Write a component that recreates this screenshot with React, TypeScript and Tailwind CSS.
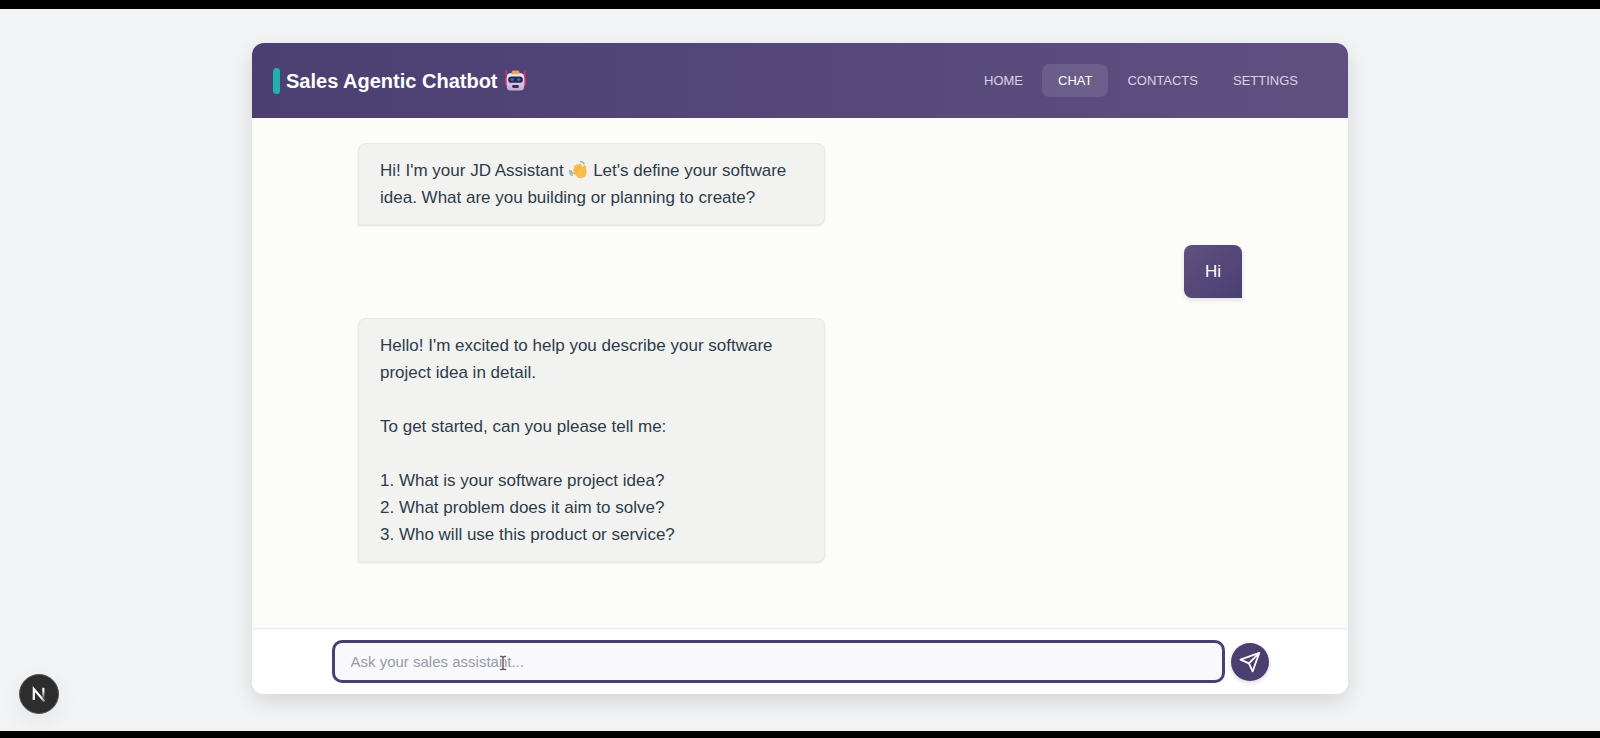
import type { ReactNode } from "react";

function RobotIcon() {
  return (
    <svg viewBox="0 0 24 24" className="h-[23px] w-[23px]" role="img" aria-label="robot">
      <defs>
        <linearGradient id="robot-face" x1="0" y1="0" x2="0" y2="1">
          <stop offset="0" stopColor="#f3e8f8" />
          <stop offset="1" stopColor="#c4a9dc" />
        </linearGradient>
      </defs>
      <path d="M2.300 1.500v13M21.700 1.500v13" stroke="#cf3a68" strokeWidth="1.500" strokeLinecap="round" />
      <rect x="1.500" y="9.500" width="3" height="8" rx="1.300" fill="#e34b77" />
      <rect x="19.500" y="9.500" width="3" height="8" rx="1.300" fill="#e34b77" />
      <rect x="3" y="4.500" width="18" height="18" rx="4" fill="url(#robot-face)" />
      <path d="M8 5.500V3.500a2 2 0 0 1 2-2h4a2 2 0 0 1 2 2v2z" fill="#e2a855" />
      <rect x="4.300" y="7.800" width="15.400" height="6.600" rx="3.300" fill="#2b2852" />
      <circle cx="8.600" cy="11" r="1.700" fill="#3568ae" />
      <circle cx="15.400" cy="11" r="1.700" fill="#3568ae" />
      <rect x="8.500" y="16.800" width="7" height="3" rx="1.200" fill="#3f2850" />
    </svg>
  );
}

function WaveIcon() {
  return (
    <svg viewBox="0 0 20 20" className="inline-block h-5 w-5 align-[-4px]" aria-hidden="true">
      <path
        d="M6.200 6.800c-.8-.9.5-2 1.300-1.200l1 1C8 5.500 7.900 4.300 9 4c.8-.2 1.300.4 1.800 1.200-.2-.9.200-1.600 1-1.700.9 0 1.400.8 1.900 1.700.5.9.9 1.600 1.200 1.800.2-.8.300-2 1.400-2 1.200 0 1.600 1.400 1.900 3.200.6 3.300.7 5.700-1 7.900-1.900 2.400-5.500 2.700-7.900.8L5.500 13.400c-.9-.8.1-2 1-1.400l-1.200-1.300c-.8-.9.300-2 1.200-1.200L5.900 8.800c-.5-.8.400-1.600 1.100-1.100z"
        fill="#f9bd48"
      />
      <path d="M7.500 7.500l3 3M6.700 9.800l2.800 2.500M10.300 6.200l2 2.800" stroke="#e5a03c" strokeWidth=".7" strokeLinecap="round" />
      <path d="M1.500 10.500c.1 2.300 1 4 2.900 5M3.200 10.800c.3 1.300.8 2 1.700 2.700M12.500 1.500c1.700.2 2.900.9 3.500 2.300" stroke="#9fb0b8" strokeWidth="1.500" fill="none" strokeLinecap="round" />
    </svg>
  );
}

function PlaneIcon() {
  return (
    <svg viewBox="0 0 24 24" className="h-6 w-6" fill="none" stroke="#fff" strokeWidth="1.800" strokeLinejoin="round" strokeLinecap="round" aria-hidden="true">
      <path d="M21.300 2.800 2.500 9.600l8.400 3.800L14.700 21.300z" />
      <path d="M21.300 2.800 10.900 13.400" />
    </svg>
  );
}

const navItems = ["HOME", "CHAT", "CONTACTS", "SETTINGS"];

function BotMessage({ children }: { children: ReactNode }) {
  return (
    <div className="max-w-[467px] self-start rounded-lg rounded-bl-none border border-[#e9eae8] bg-[#f2f3f0] px-[21px] py-[13px] whitespace-pre-wrap text-[#2d3b4b] shadow-[0_1px_2px_rgba(0,0,0,0.12)]">
      {children}
    </div>
  );
}

export default function App() {
  return (
    <div className="flex min-h-screen flex-col bg-[#f1f3f5] font-['Liberation_Sans',Arial,sans-serif]">
      <div className="h-[9px] bg-black" />
      <main className="flex flex-1 flex-col px-4 pt-[34px] pb-[37px]">
        <section className="mx-auto flex w-full max-w-[1096px] flex-1 flex-col overflow-hidden rounded-xl bg-white shadow-[0_8px_20px_rgba(0,0,0,0.12)]">
          <header className="flex h-[75px] items-center justify-between bg-linear-to-r from-[#4b3f72] to-[#5f5080] pr-[34px] pl-[21px]">
            <h1 className="flex items-center text-xl font-bold text-white">
              <span className="mr-1.5 h-[26px] w-[7px] rounded-sm bg-[#20b2aa]" />
              Sales Agentic Chatbot
              <span className="ml-1.5">
                <RobotIcon />
              </span>
            </h1>
            <nav className="flex gap-[3px]">
              {navItems.map((item) => (
                <a
                  key={item}
                  href={"#" + item.toLowerCase()}
                  aria-current={item === "CHAT" ? "page" : undefined}
                  className={
                    item === "CHAT"
                      ? "rounded-lg bg-white/10 px-4 text-[13px] leading-[33px] text-white"
                      : "rounded-lg px-4 text-[13px] leading-[33px] text-[#dcd2e6]"
                  }
                >
                  {item}
                </a>
              ))}
            </nav>
          </header>

          <div className="flex-1 bg-[#fcfdf8] px-6 pt-[25px] pb-6">
            <div className="mx-auto flex max-w-[884px] flex-col gap-5 text-[17px] leading-[27px]">
              <BotMessage>
                Hi! I'm your JD Assistant <WaveIcon /> Let's define your software idea. What are you building or planning to create?
              </BotMessage>
              <div className="self-end rounded-lg rounded-br-none bg-linear-to-br from-[#5f5080] to-[#4b3f72] px-[21px] py-[13px] text-white shadow-[0_2px_5px_rgba(0,0,0,0.12)]">
                Hi
              </div>
              <BotMessage>
                {"Hello! I'm excited to help you describe your software project idea in detail.\n\nTo get started, can you please tell me:\n\n1. What is your software project idea?\n2. What problem does it aim to solve?\n3. Who will use this product or service?"}
              </BotMessage>
            </div>
          </div>

          <footer className="border-t border-[#e6e8e8] bg-white px-6 py-[11px]">
            <form className="mx-auto flex max-w-[937px] items-center gap-1.5" onSubmit={(e) => e.preventDefault()}>
              <div className="relative flex flex-1">
                <input
                  type="text"
                  aria-label="Message"
                  placeholder="Ask your sales assistant..."
                  className="h-[43px] w-full rounded-[10px] border-3 border-[#4b3f72] bg-[#f9f9fd] px-4 text-[15px] text-[#2d3b4b] outline-none placeholder:text-[#969ba5]"
                />
                <svg viewBox="0 0 10 16" className="pointer-events-none absolute top-[15px] left-[166px] h-4 w-2.5" fill="none" aria-hidden="true">
                  <path d="M2 1.500h2l1 1 1-1h2M5 2.500v11M2 14.500h2l1-1 1 1h2" stroke="#fff" strokeWidth="2.600" />
                  <path d="M2 1.500h2l1 1 1-1h2M5 2.500v11M2 14.500h2l1-1 1 1h2" stroke="#655f5b" strokeWidth="1.500" />
                </svg>
              </div>
              <button type="submit" aria-label="Send" className="flex h-[38px] w-[38px] items-center justify-center rounded-full bg-[#4b3f72] shadow-[0_2px_5px_rgba(0,0,0,0.15)]">
                <PlaneIcon />
              </button>
            </form>
          </footer>
        </section>
      </main>
      <div className="h-[7px] bg-black" />

      <button
        type="button"
        aria-label="Open developer tools"
        className="fixed bottom-6 left-[19px] flex h-10 w-10 items-center justify-center rounded-full border border-[#555] bg-[#2d2d2d] shadow-[0_8px_24px_rgba(0,0,0,0.06)]"
      >
        <svg viewBox="0 0 16 16" className="h-4 w-4" fill="none" aria-hidden="true">
          <defs>
            <linearGradient id="mark-stem" x1="0" y1="0" x2="0" y2="1">
              <stop offset="0.300" stopColor="#fff" />
              <stop offset="1" stopColor="#fff" stopOpacity="0.100" />
            </linearGradient>
            <linearGradient id="mark-slash" x1="0.300" y1="0.300" x2="1" y2="1">
              <stop offset="0.500" stopColor="#fff" />
              <stop offset="1" stopColor="#fff" stopOpacity="0.400" />
            </linearGradient>
          </defs>
          <path d="M2.800 14V3L13.500 15.500" stroke="url(#mark-slash)" strokeWidth="2.200" />
          <rect x="11.300" y="1.800" width="2.100" height="10.700" fill="url(#mark-stem)" />
        </svg>
      </button>
    </div>
  );
}
